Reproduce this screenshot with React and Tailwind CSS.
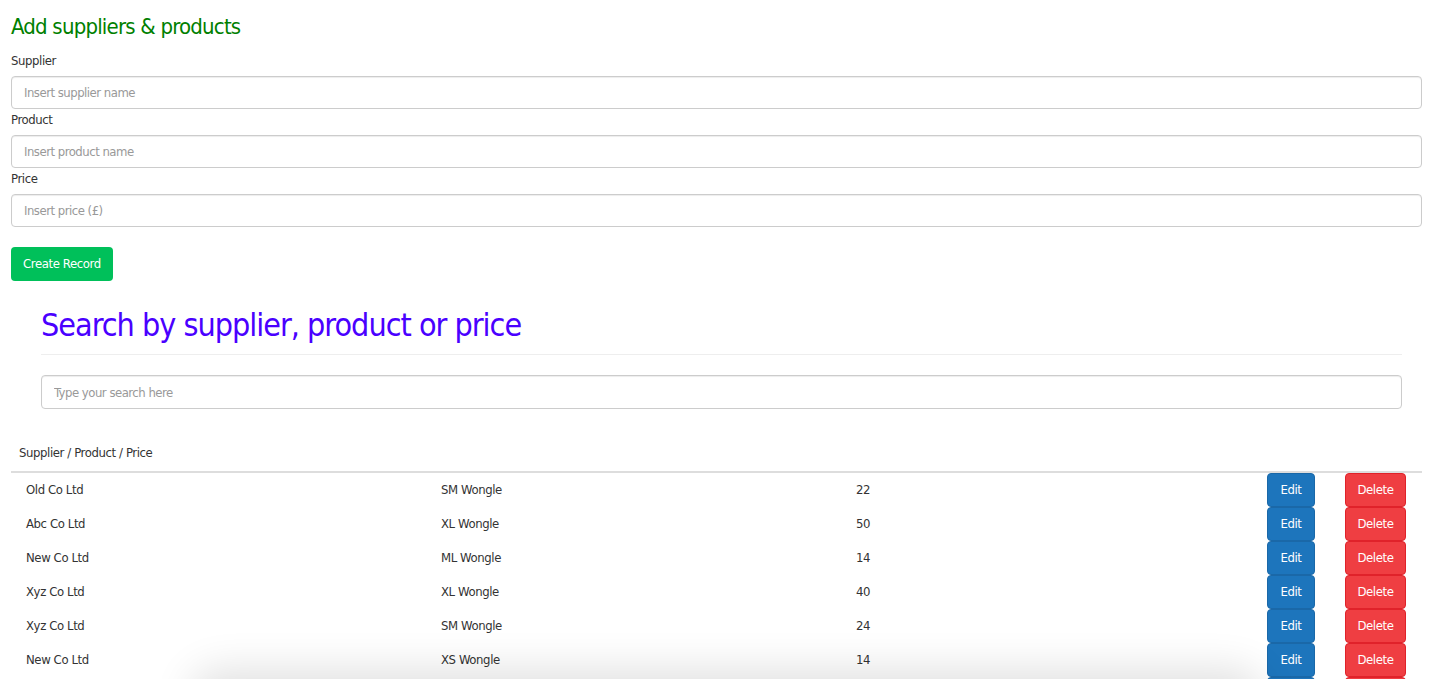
const rows = [
  ["Old Co Ltd", "SM Wongle", "22"],
  ["Abc Co Ltd", "XL Wongle", "50"],
  ["New Co Ltd", "ML Wongle", "14"],
  ["Xyz Co Ltd", "XL Wongle", "40"],
  ["Xyz Co Ltd", "SM Wongle", "24"],
  ["New Co Ltd", "XS Wongle", "14"],
  ["Abc Co Ltd", "XS Wongle", "30"],
];

function Field({ label, placeholder }) {
  return (
    <div>
      <label className="block h-[26px] pt-[1px] text-[13px] leading-[20px] tracking-[-0.4px] text-[#333]">{label}</label>
      <input
        className="block h-[33px] w-full rounded-[4px] border border-[#ccc] px-3 text-[13px] tracking-[-0.5px] text-[#555] placeholder:text-[#999] shadow-[inset_0_1px_1px_rgba(0,0,0,0.075)]"
        placeholder={placeholder}
      />
    </div>
  );
}

export default function App() {
  return (
    <div className="min-h-screen bg-white px-[11px] pt-[11px] font-['DejaVu_Sans_Condensed','DejaVu_Sans',sans-serif] text-[#333]">
      <h1 className="h-[39px] text-[22px] leading-[32px] tracking-[-0.8px] text-[#008000]">Add suppliers &amp; products</h1>
      <Field label="Supplier" placeholder="Insert supplier name" />
      <Field label="Product" placeholder="Insert product name" />
      <Field label="Price" placeholder="Insert price (£)" />
      <button className="mt-[20px] h-[34px] rounded-[4px] bg-[#00c05a] px-[12px] text-[13px] tracking-[-0.4px] text-white">
        Create Record
      </button>

      <div className="pl-[30px] pr-[20px]">
        <h2 className="mt-[22px] h-[51px] text-[32px] leading-[44px] tracking-[-1px] text-[#4a00ff]">Search by supplier, product or price</h2>
        <hr className="border-t border-[#eee]" />
        <input
          className="mt-[20px] block h-[34px] w-full rounded-[4px] border border-[#ccc] px-3 text-[13px] tracking-[-0.5px] placeholder:text-[#999] shadow-[inset_0_1px_1px_rgba(0,0,0,0.075)]"
          placeholder="Type your search here"
        />
      </div>

      <div className="mt-[29px]">
        <div className="h-[35px] border-b-2 border-[#ddd] px-[8px] pt-[5px] text-[13px] leading-[20px] tracking-[-0.4px]">
          Supplier / Product / Price
        </div>
        {rows.map(([s, p, n], i) => (
          <div key={i} className="grid h-[34px] grid-cols-[415px_415px_411px_78px_61px] items-center pl-[15px] text-[13px] tracking-[-0.4px]">
            <span className="-mt-[1px]">{s}</span>
            <span className="-mt-[1px]">{p}</span>
            <span className="-mt-[1px]">{n}</span>
            <span>
              <button className="h-[34px] w-[48px] rounded-[4px] border border-[#1a68a8] bg-[#1d75bc] text-white">Edit</button>
            </span>
            <span>
              <button className="h-[34px] w-[61px] rounded-[4px] border border-[#e0222a] bg-[#ef3e42] text-white">Delete</button>
            </span>
          </div>
        ))}
      </div>
      <div className="pointer-events-none fixed bottom-[-40px] left-[200px] right-[180px] h-[40px] rounded-full shadow-[0_0_40px_10px_rgba(0,0,0,0.12)]" />
    </div>
  );
}
